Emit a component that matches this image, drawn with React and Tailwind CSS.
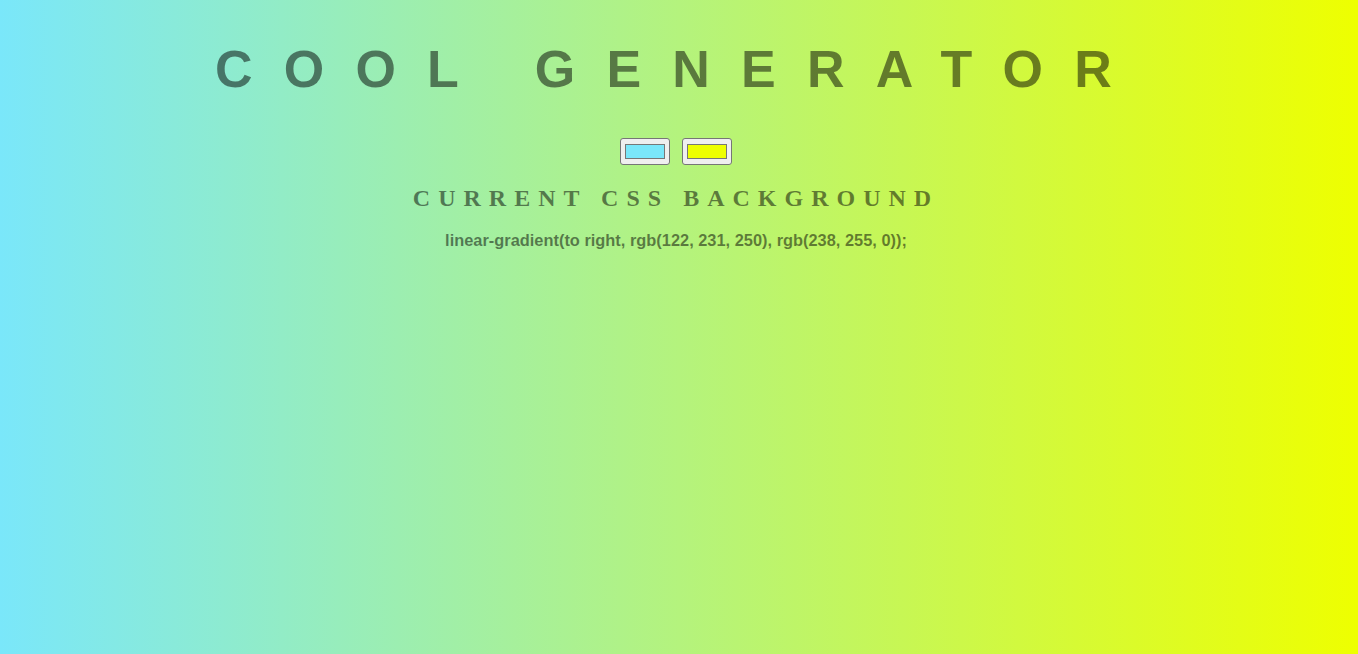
import React, { useState } from 'react';

function ColorSwatch({ color }) {
  return (
    <div className="w-[50px] h-[27px] bg-[#efefef] border border-[#767676] rounded-[3px] flex items-center justify-center">
      <div className="w-[40px] h-[15px] border border-[#777]" style={{ backgroundColor: color }} />
    </div>
  );
}

function App() {
  const [left] = useState('rgb(122, 231, 250)');
  const [right] = useState('rgb(238, 255, 0)');

  return (
    <div
      className="min-h-screen w-full flex flex-col items-center text-black/50"
      style={{ background: `linear-gradient(to right, ${left}, ${right})` }}
    >
      {/* title */}
      <h1 className="mt-[43px] text-[52px] leading-none font-bold tracking-[0.6em] font-['Liberation_Sans',Arial,sans-serif]">
        COOL GENERATOR
      </h1>

      <div className="mt-[43px] flex gap-[12px] -ml-[6px]">
        <ColorSwatch color={left} />
        <ColorSwatch color={right} />
      </div>

      <h2 className="mt-[21px] -ml-[6px] text-[24px] leading-none font-bold tracking-[8px] font-['Liberation_Serif','Times_New_Roman',serif]">
        CURRENT CSS BACKGROUND
      </h2>

      <p className="mt-[22px] -ml-[6px] text-[16.4px] leading-none font-bold font-['Liberation_Sans',Arial,sans-serif]">
        linear-gradient(to right, {left}, {right});
      </p>
    </div>
  );
}

export default App;
